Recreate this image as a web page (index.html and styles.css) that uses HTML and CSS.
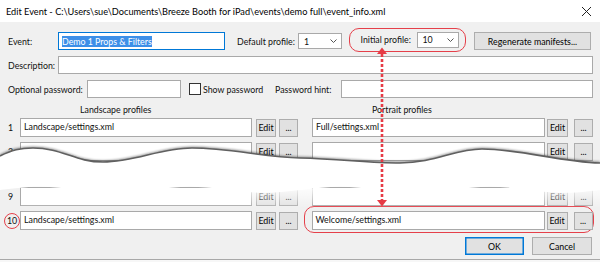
FILE: index.html
```html
<!DOCTYPE html>
<html lang="en">
<head>
    <meta charset="UTF-8">
    <title>Edit Event</title>
    <link rel="stylesheet" href="styles.css">
</head>
<body>
    <div class="window">
        <div class="titlebar">
            <span class="title">Edit Event - C:\Users\sue\Documents\Breeze Booth for iPad\events\demo full\event_info.xml</span>
            <svg class="close" width="11" height="11" viewBox="0 0 11 11">
                <path d="M1 1 L10 10 M10 1 L1 10" stroke="#222" stroke-width="1" fill="none"/>
            </svg>
        </div>

        <div class="dialog">
            <div class="row row-event">
                <span class="label lbl-event">Event:</span>
                <div class="field field-event focused"><span class="selected">Demo 1 Props &amp; Filters</span></div>
                <span class="label lbl-default">Default profile:</span>
                <div class="combo combo-default">
                    <span>1</span>
                    <svg width="7" height="4" viewBox="0 0 7 4"><path d="M0.5 0.5 L3.5 3.5 L6.5 0.5" stroke="#555" fill="none"/></svg>
                </div>
                <div class="callout callout-initial">
                    <span class="label lbl-initial">Initial profile:</span>
                    <div class="combo combo-initial">
                        <span>10</span>
                        <svg width="7" height="4" viewBox="0 0 7 4"><path d="M0.5 0.5 L3.5 3.5 L6.5 0.5" stroke="#555" fill="none"/></svg>
                    </div>
                </div>
                <button class="btn btn-regen">Regenerate manifests...</button>
            </div>

            <div class="row row-desc">
                <span class="label lbl-event">Description:</span>
                <div class="field field-wide"></div>
            </div>

            <div class="row row-pass">
                <span class="label lbl-pass">Optional password:</span>
                <div class="field field-pass"></div>
                <span class="check"></span>
                <span class="label lbl-show">Show password</span>
                <span class="label lbl-hint">Password hint:</span>
                <div class="field field-wide"></div>
            </div>

            <div class="heads">
                <span class="head head-land">Landscape profiles</span>
                <span class="head head-port">Portrait profiles</span>
            </div>

            <div class="profiles">
                <div class="prow">
                    <span class="num">1</span>
                    <div class="field pfield-left">Landscape/settings.xml</div>
                    <button class="btn edit-left">Edit</button>
                    <button class="btn dots-left">...</button>
                    <div class="field pfield-right">Full/settings.xml</div>
                    <button class="btn edit-right">Edit</button>
                    <button class="btn dots-right">...</button>
                </div>
                <div class="prow">
                    <span class="num">2</span>
                    <div class="field pfield-left"></div>
                    <button class="btn edit-left">Edit</button>
                    <button class="btn dots-left">...</button>
                    <div class="field pfield-right"></div>
                    <button class="btn edit-right">Edit</button>
                    <button class="btn dots-right">...</button>
                </div>
                <div class="prow prow-nine">
                    <span class="num">9</span>
                    <div class="field pfield-left"></div>
                    <button class="btn edit-left">Edit</button>
                    <button class="btn dots-left">...</button>
                    <div class="field pfield-right"></div>
                    <button class="btn edit-right">Edit</button>
                    <button class="btn dots-right">...</button>
                </div>
                <div class="prow">
                    <span class="num circled">10</span>
                    <div class="field pfield-left">Landscape/settings.xml</div>
                    <button class="btn edit-left">Edit</button>
                    <button class="btn dots-left">...</button>
                    <div class="callout callout-row">
                        <div class="field pfield-right">Welcome/settings.xml</div>
                        <button class="btn edit-right">Edit</button>
                        <button class="btn dots-right">...</button>
                    </div>
                </div>
            </div>

            <div class="actions">
                <button class="btn btn-ok">OK</button>
                <button class="btn btn-cancel">Cancel</button>
            </div>
        </div>

        <!-- torn-paper cut over rows 3..8 -->
        <svg class="tear" width="600" height="75" viewBox="0 138 600 75">
            <defs>
                <filter id="soft" x="-5%" y="-50%" width="110%" height="200%">
                    <feGaussianBlur stdDeviation="1.3"/>
                </filter>
                <linearGradient id="fade" x1="0" y1="0" x2="0" y2="1">
                    <stop offset="0" stop-color="#fff" stop-opacity="0.8"/>
                    <stop offset="1" stop-color="#fff" stop-opacity="0"/>
                </linearGradient>
            </defs>
            <rect x="21" y="189" width="579" height="19" fill="url(#fade)"/>
            <path d="M0,156 C12,150 20,148 33,148 C62,148 75,162 103,162 C135,162 160,148 192,148 C230,148 262,157 300,158 C340,159 370,163 400,163 C435,163 455,149 482,149 C520,149 560,162 600,163"
                  fill="none" stroke="#000" stroke-opacity="0.4" stroke-width="3" filter="url(#soft)"/>
            <path d="M0,156 C12,150 20,148 33,148 C62,148 75,162 103,162 C135,162 160,148 192,148 C230,148 262,157 300,158 C340,159 370,163 400,163 C435,163 455,149 482,149 C520,149 560,162 600,163
                     L600,190 C590,191 580,192.8 565,192.8 C540,192.8 515,186.8 490,186.8 C465,186.8 440,192.8 415,192.8 C390,192.8 365,186.8 340,186.8 C315,186.8 290,192.8 265,192.8 C240,192.8 215,186.8 190,186.8 C165,186.8 140,192.8 115,192.8 C90,192.8 65,186.8 40,186.8 C25,186.8 10,189 0,190 Z"
                  fill="#fff"/>
            <path d="M0,156 C12,150 20,148 33,148 C62,148 75,162 103,162 C135,162 160,148 192,148 C230,148 262,157 300,158 C340,159 370,163 400,163 C435,163 455,149 482,149 C520,149 560,162 600,163"
                  fill="none" stroke="#606060" stroke-width="1.6"/>
        </svg>

        <!-- red annotation arrow from initial profile to row 10 -->
        <svg class="arrow" width="14" height="164" viewBox="375 46 14 164">
            <line x1="382" y1="54" x2="382" y2="200" stroke="#e63b45" stroke-width="2.6" stroke-dasharray="3 2"/>
            <polygon points="377,54 387,54 382,47.5" fill="#e63b45"/>
            <polygon points="377,200 387,200 382,206.5" fill="#e63b45"/>
        </svg>
    </div>
</body>
</html>
```

FILE: styles.css
```css
body {
    margin: 0;
    background: #f7f7f7;
    font-family: Lato, 'Noto Sans', sans-serif;
    font-size: 8.8px;
    color: #111;
    width: 600px;
    height: 262px;
    overflow: hidden;
}

.window {
    position: relative;
    height: 259px;
    background: #f0f0f0;
    border-bottom: 1px solid #a8a8a8;
}

.titlebar {
    height: 22px;
    background: #fff;
    display: flex;
    align-items: center;
    justify-content: space-between;
    padding: 0 8px 0 6px;
}

.title {
    color: #000;
    font-size: 9.2px;
}

.dialog {
    padding: 10px 7px 0 8px;
}

.row {
    display: flex;
    align-items: center;
    height: 18px;
}

.row-desc,
.row-pass {
    margin-top: 6px;
}

.label {
    white-space: nowrap;
}

.lbl-event {
    width: 50px;
    flex: none;
}

.lbl-default {
    margin-left: 12px;
    width: 61px;
}

.lbl-initial {
    width: 56px;
}

.lbl-pass {
    width: 79px;
    flex: none;
}

.lbl-show {
    margin-left: 2px;
    width: 72px;
}

.lbl-hint {
    width: 66px;
}

.field {
    box-sizing: border-box;
    height: 18px;
    background: #fff;
    border: 1px solid #a9a9a9;
    padding: 0 3px;
    display: flex;
    align-items: center;
    white-space: nowrap;
    flex: none;
}

.field.focused {
    border-color: #0078d7;
}

.selected {
    background: #3d8fe8;
    color: #fff;
}

.field-event {
    width: 167px;
}

.field-wide {
    flex: 1;
}

.field-pass {
    width: 94px;
}

.check {
    box-sizing: border-box;
    width: 12px;
    height: 12px;
    margin-left: 8px;
    background: #fff;
    border: 1px solid #333;
}

.combo {
    box-sizing: border-box;
    height: 16px;
    background: #fff;
    border: 1px solid #a9a9a9;
    display: flex;
    align-items: center;
    justify-content: space-between;
    padding: 0 4px 0 5px;
}

.combo-default {
    width: 44px;
}

.combo-initial {
    width: 42px;
}

.callout {
    display: flex;
    align-items: center;
    border: 1.5px solid #e5404a;
    border-radius: 10px;
}

.callout-initial {
    margin-left: 7px;
    margin-bottom: 3px;
    padding: 3px 6.5px 3px 10.5px;
}

.btn {
    box-sizing: border-box;
    height: 18px;
    padding: 0;
    background: #e1e1e1;
    border: 1px solid #adadad;
    font-family: inherit;
    font-size: 8.8px;
    color: #000;
    flex: none;
}

.btn-regen {
    margin-left: 8px;
    width: 117px;
}

.heads {
    display: flex;
    margin-top: 6px;
    height: 12px;
    line-height: 12px;
}

.head-land {
    margin-left: 72px;
    width: 292px;
}

.profiles {
    display: flex;
    flex-direction: column;
    gap: 5px;
    margin-top: 2px;
}

.prow {
    display: flex;
    align-items: center;
    height: 19px;
}

.prow-nine {
    margin-top: 21px;
}

.num {
    width: 12px;
    flex: none;
}

.num.circled {
    box-sizing: border-box;
    width: 16px;
    height: 16px;
    margin-left: -4px;
    border: 1.5px solid #e5404a;
    border-radius: 50%;
    display: flex;
    align-items: center;
    justify-content: center;
    font-size: 8.8px;
}

.prow .field {
    height: 19px;
    align-items: flex-start;
    padding-top: 2px;
}

.pfield-left {
    width: 232px;
}

.edit-left {
    margin-left: 4px;
    width: 20px;
}

.dots-left {
    margin-left: 3px;
    width: 19px;
}

.pfield-right {
    margin-left: 14px;
    width: 233px;
}

.edit-right {
    margin-left: 2px;
    width: 21px;
}

.dots-right {
    margin-left: 6px;
    width: 19px;
}

.callout-row {
    margin: -5.5px 0 -3.5px 6px;
    padding: 4px 0 2px 6.5px;
}

.callout-row .pfield-right {
    margin-left: 0;
}

.actions {
    display: flex;
    justify-content: flex-end;
    margin-top: 7px;
    padding-right: 1px;
}

.btn-ok {
    width: 59px;
    border-color: #0078d7;
    box-shadow: inset 0 0 0 0.5px #0078d7;
}

.btn-cancel {
    width: 60px;
    margin-left: 8px;
}

.tear {
    position: absolute;
    left: 0;
    top: 138px;
}

.arrow {
    position: absolute;
    left: 375px;
    top: 46px;
}
```
